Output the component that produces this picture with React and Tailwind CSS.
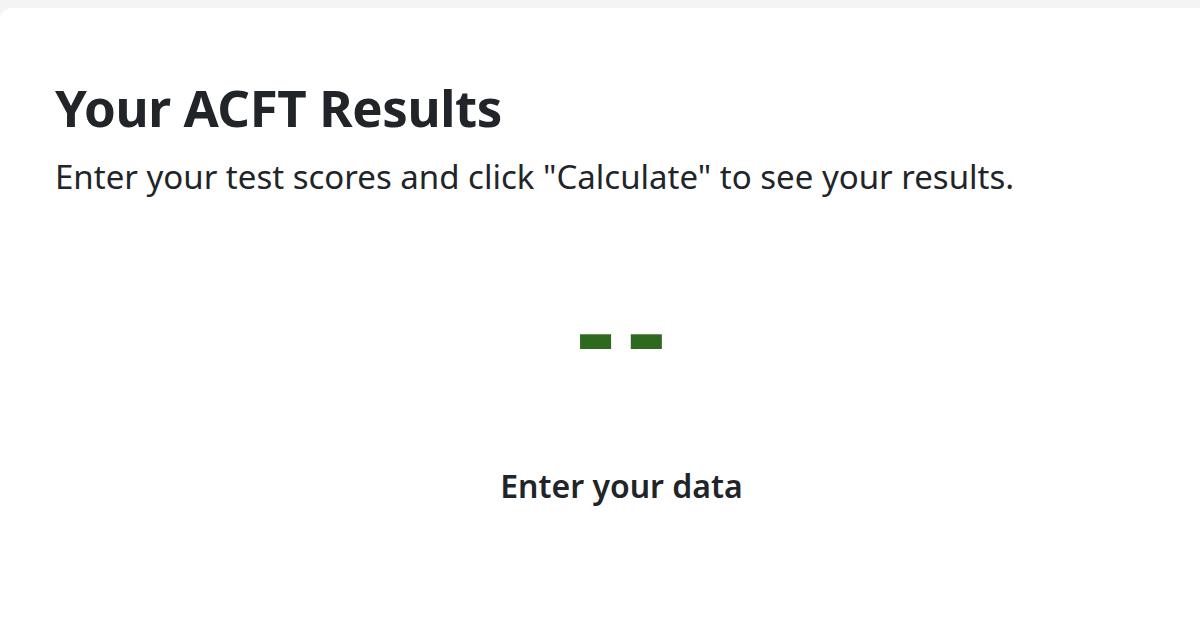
export default function App() {
  return (
    <div className="h-[630px] w-[1200px] overflow-hidden bg-[#f4f4f4] pt-2" style={{ fontFamily: '"Noto Sans", "Open Sans", sans-serif' }}>
      <div className="h-[640px] w-[1243px] rounded-tl-xl bg-white px-[55px] pt-[68px] text-[#212529]">
        <h1 className="text-[51px] font-bold leading-tight tracking-[-0.4px]">Your ACFT Results</h1>
        <p className="mt-[14px] text-[33px] leading-snug text-[#212529]">Enter your test scores and click "Calculate" to see your results.</p>
        <div className="flex flex-col items-center">
          <div className="mt-[70px] pl-[12px] text-[118px] font-bold leading-none tracking-[13px] text-[#2d6a1f]">--</div>
          <div className="mt-[75px] text-[32px] font-semibold text-[#212529]">Enter your data</div>
        </div>
      </div>
    </div>
  );
}
